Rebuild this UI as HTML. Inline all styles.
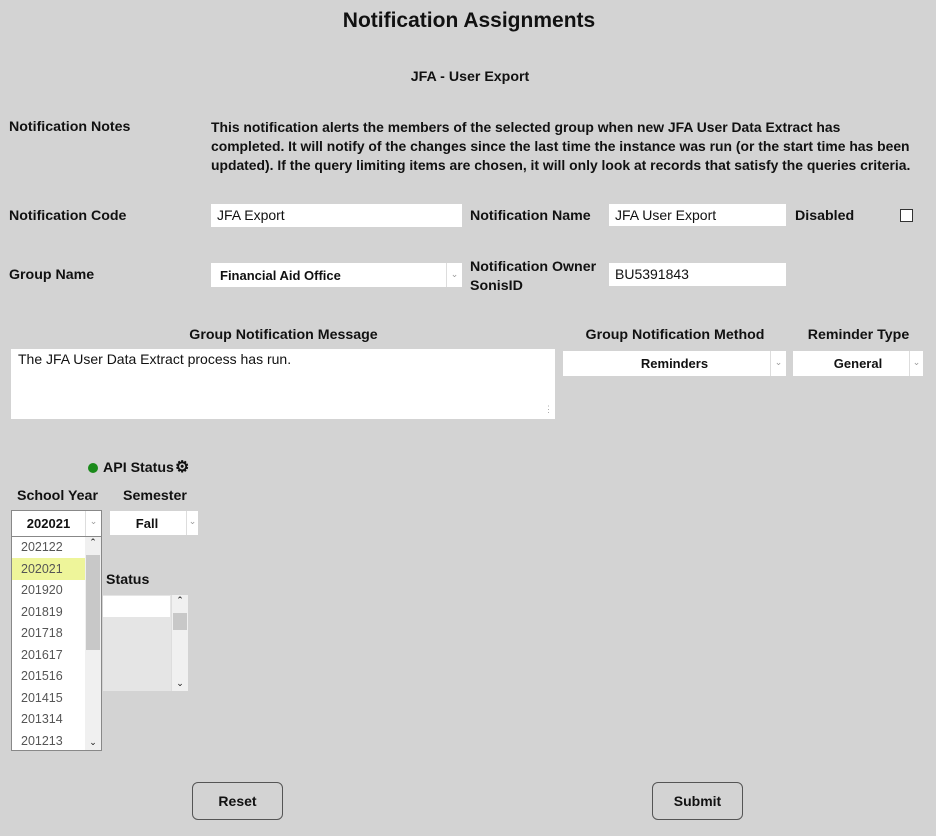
<!DOCTYPE html>
<html><head><style>
*{box-sizing:border-box;margin:0;padding:0}
body{width:936px;height:836px;background:#d3d3d3;font-family:"Liberation Sans",sans-serif;font-weight:bold;font-size:14.2px;color:#111;position:relative;overflow:hidden}
.a{position:absolute;white-space:nowrap}
.in{position:absolute;background:#fff;font-weight:normal;font-size:14px;padding-left:6px;line-height:22px}
.sel{position:absolute;background:#fff;font-size:13px;text-align:center}
.arr{position:absolute;top:0;bottom:0;right:0;width:16px;border-left:1px solid #ddd;color:#999;font-size:9px;text-align:center;font-weight:normal}
.btn{position:absolute;border:1px solid #555;border-radius:6px;text-align:center;line-height:36px;font-size:14px}
.it{position:absolute;left:9px;font-weight:normal;color:#555;font-size:12.5px}
</style></head><body>
<div class="a" style="left:0;width:938px;text-align:center;top:9px;font-size:21px">Notification Assignments</div>
<div class="a" style="left:0;width:940px;text-align:center;top:69px">JFA - User Export</div>
<div class="a" style="left:9px;top:119px">Notification Notes</div>
<div class="a" style="left:211px;top:118px;line-height:19px;font-size:13.9px">This notification alerts the members of the selected group when new JFA User Data Extract has<br>completed. It will notify of the changes since the last time the instance was run (or the start time has been<br>updated). If the query limiting items are chosen, it will only look at records that satisfy the queries criteria.</div>

<div class="a" style="left:9px;top:208px">Notification Code</div>
<div class="in" style="left:211px;top:204px;width:251px;height:23px">JFA Export</div>
<div class="a" style="left:470px;top:208px">Notification Name</div>
<div class="in" style="left:609px;top:204px;width:177px;height:22px">JFA User Export</div>
<div class="a" style="left:795px;top:208px">Disabled</div>
<div class="a" style="left:900px;top:209px;width:13px;height:13px;border:1px solid #333;background:#fff"></div>

<div class="a" style="left:9px;top:267px">Group Name</div>
<div class="sel" style="left:211px;top:263px;width:251px;height:24px;text-align:left;padding-left:9px;line-height:26px;font-size:13px">Financial Aid Office<div class="arr" style="line-height:22px">&#8964;</div></div>
<div class="a" style="left:470px;top:258px;line-height:19px">Notification Owner<br>SonisID</div>
<div class="in" style="left:609px;top:263px;width:177px;height:23px">BU5391843</div>

<div class="a" style="left:11px;width:545px;text-align:center;top:327px">Group Notification Message</div>
<div class="in" style="left:11px;top:349px;width:544px;height:70px;line-height:20px;padding-left:7px">The JFA User Data Extract process has run.<span style="position:absolute;right:2px;bottom:0;color:#aaa;font-size:9px">&#8942;</span></div>
<div class="a" style="left:563px;width:224px;text-align:center;top:327px">Group Notification Method</div>
<div class="sel" style="left:563px;top:351px;width:223px;height:25px;line-height:26px">Reminders<div class="arr" style="line-height:22px">&#8964;</div></div>
<div class="a" style="left:793px;width:131px;text-align:center;top:327px">Reminder Type</div>
<div class="sel" style="left:793px;top:351px;width:130px;height:25px;line-height:26px">General<div class="arr" style="line-height:22px;width:14px">&#8964;</div></div>

<div class="a" style="left:88px;top:463px;width:10px;height:10px;border-radius:5px;background:#1a8a1a"></div>
<div class="a" style="left:103px;top:460px">API Status</div>
<div class="a" style="left:175px;top:457px;font-size:16px">&#9881;</div>
<div class="a" style="left:17px;top:488px">School Year</div>
<div class="a" style="left:123px;top:488px">Semester</div>
<div class="sel" style="left:11px;top:510px;width:91px;height:27px;border:1px solid #888;line-height:26px;padding-right:16px">202021<div class="arr" style="line-height:20px">&#8964;</div></div>
<div class="sel" style="left:110px;top:511px;width:88px;height:24px;line-height:25px;padding-right:14px">Fall<div class="arr" style="width:12px;line-height:20px">&#8964;</div></div>

<div class="a" style="left:106px;top:572px">Status</div>
<div class="a" style="left:103px;top:595px;width:85px;height:96px;background:#e5e5e5">
<div style="position:absolute;left:0;top:1px;width:67px;height:21px;background:#fff"></div>
<div style="position:absolute;right:0;top:0;width:17px;height:96px;background:#f0f0f0;border-left:1px solid #ddd"><div style="position:absolute;left:1px;top:18px;width:14px;height:17px;background:#c8c8c8"></div><div style="position:absolute;top:0;width:16px;text-align:center;font-size:9px;font-weight:normal">&#8963;</div><div style="position:absolute;bottom:2px;width:16px;text-align:center;font-size:9px;font-weight:normal">&#8964;</div></div>
</div>

<div class="a" style="left:11px;top:537px;width:91px;height:214px;background:#fff;border:1px solid #888;border-top:none">
<div style="position:absolute;left:0;top:21px;width:73px;height:22px;background:#eef59a"></div>
<div class="it" style="top:3px">202122</div>
<div class="it" style="top:25px">202021</div>
<div class="it" style="top:46px">201920</div>
<div class="it" style="top:68px">201819</div>
<div class="it" style="top:89px">201718</div>
<div class="it" style="top:111px">201617</div>
<div class="it" style="top:132px">201516</div>
<div class="it" style="top:154px">201415</div>
<div class="it" style="top:175px">201314</div>
<div class="it" style="top:197px">201213</div>
<div style="position:absolute;right:0;top:0;width:16px;height:213px;background:#f0f0f0"><div style="position:absolute;left:1px;top:18px;width:14px;height:95px;background:#c8c8c8"></div><div style="position:absolute;top:0;width:16px;text-align:center;font-size:9px;font-weight:normal">&#8963;</div><div style="position:absolute;bottom:2px;width:16px;text-align:center;font-size:9px;font-weight:normal">&#8964;</div></div>
</div>

<div class="btn" style="left:192px;top:782px;width:91px;height:38px">Reset</div>
<div class="btn" style="left:652px;top:782px;width:91px;height:38px">Submit</div>
</body></html>
